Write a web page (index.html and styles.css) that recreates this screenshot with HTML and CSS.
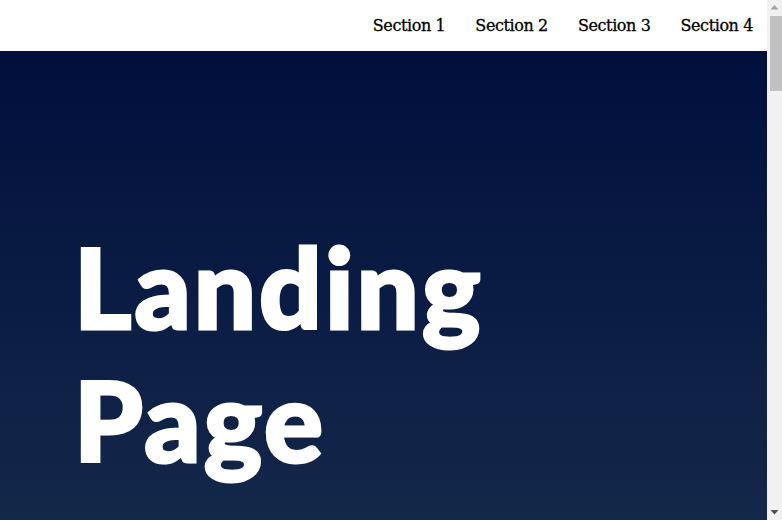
FILE: index.html
```html
<!DOCTYPE html>
<html lang="en">
<head>
<meta charset="utf-8">
<title>Landing Page</title>
<link rel="stylesheet" href="styles.css">
</head>
<body>
<div class="viewport">
  <div class="page">
    <header class="page-header">
      <nav class="navbar">
        <ul class="nav-list">
          <li><a class="nav-link" href="#section1">Section 1</a></li>
          <li><a class="nav-link" href="#section2">Section 2</a></li>
          <li><a class="nav-link" href="#section3">Section 3</a></li>
          <li><a class="nav-link" href="#section4">Section 4</a></li>
        </ul>
      </nav>
    </header>
    <main class="main">
      <section class="hero">
        <h1 class="hero-title">Landing<br>Page</h1>
      </section>
      <section class="section" id="section1"><h2 class="section-title">Section 1</h2></section>
      <section class="section" id="section2"><h2 class="section-title">Section 2</h2></section>
      <section class="section" id="section3"><h2 class="section-title">Section 3</h2></section>
      <section class="section" id="section4"><h2 class="section-title">Section 4</h2></section>
    </main>
  </div>
  <div class="scrollbar" aria-hidden="true">
    <div class="sb-button">
      <svg width="15" height="15" viewBox="0 0 15 15"><polygon points="3.5,9.5 11.5,9.5 7.5,5" fill="#a3a3a3"/></svg>
    </div>
    <div class="sb-track">
      <div class="sb-thumb"></div>
    </div>
    <div class="sb-button">
      <svg width="15" height="15" viewBox="0 0 15 15"><polygon points="3.5,5 11.5,5 7.5,9.5" fill="#505050"/></svg>
    </div>
  </div>
</div>
</body>
</html>
```
FILE: styles.css
```css
html, body {
  margin: 0;
  padding: 0;
  height: 100%;
  overflow: hidden;
}
body {
  font-family: "DejaVu Serif", serif;
  background: #14284a;
  color: #fff;
}
.viewport {
  display: flex;
  height: 100vh;
}
.page {
  flex: 1;
  min-width: 0;
  overflow: hidden;
}
.scrollbar {
  width: 15px;
  flex: none;
  background: #f1f1f1;
  display: flex;
  flex-direction: column;
}
.sb-button {
  height: 15px;
  flex: none;
}
.sb-button svg {
  display: block;
}
.sb-track {
  flex: 1;
  padding: 1px 0 0 3px;
}
.sb-thumb {
  height: 75px;
  background: #c1c1c1;
}
.page-header {
  background: #fff;
  height: 51px;
  display: flex;
  justify-content: flex-end;
  align-items: center;
}
.nav-list {
  list-style: none;
  margin: 0;
  padding: 0;
  display: flex;
}
.nav-link {
  display: block;
  padding: 0 14px 0 16px;
  font-size: 16px;
  color: #000;
  text-decoration: none;
  line-height: 51px;
  letter-spacing: -0.4px;
  -webkit-text-stroke: 0.3px #000;
}
.hero {
  height: 469px;
  background: linear-gradient(180deg, #000f3c 0%, #14284a 100%);
  display: flex;
  align-items: flex-start;
  padding: 0 0 0 74px;
}
.hero-title {
  margin: 169px 0 0;
  font-family: "Lato", sans-serif;
  font-weight: 900;
  font-size: 110px;
  line-height: 133px;
  letter-spacing: 3px;
  color: #fff;
  -webkit-text-stroke: 3px #fff;
}
.section {
  box-sizing: border-box;
  min-height: 720px;
  padding: 40px 72px;
  background: #14284a;
}
.section-title {
  margin: 0;
  font-family: "DejaVu Serif", serif;
}
```
